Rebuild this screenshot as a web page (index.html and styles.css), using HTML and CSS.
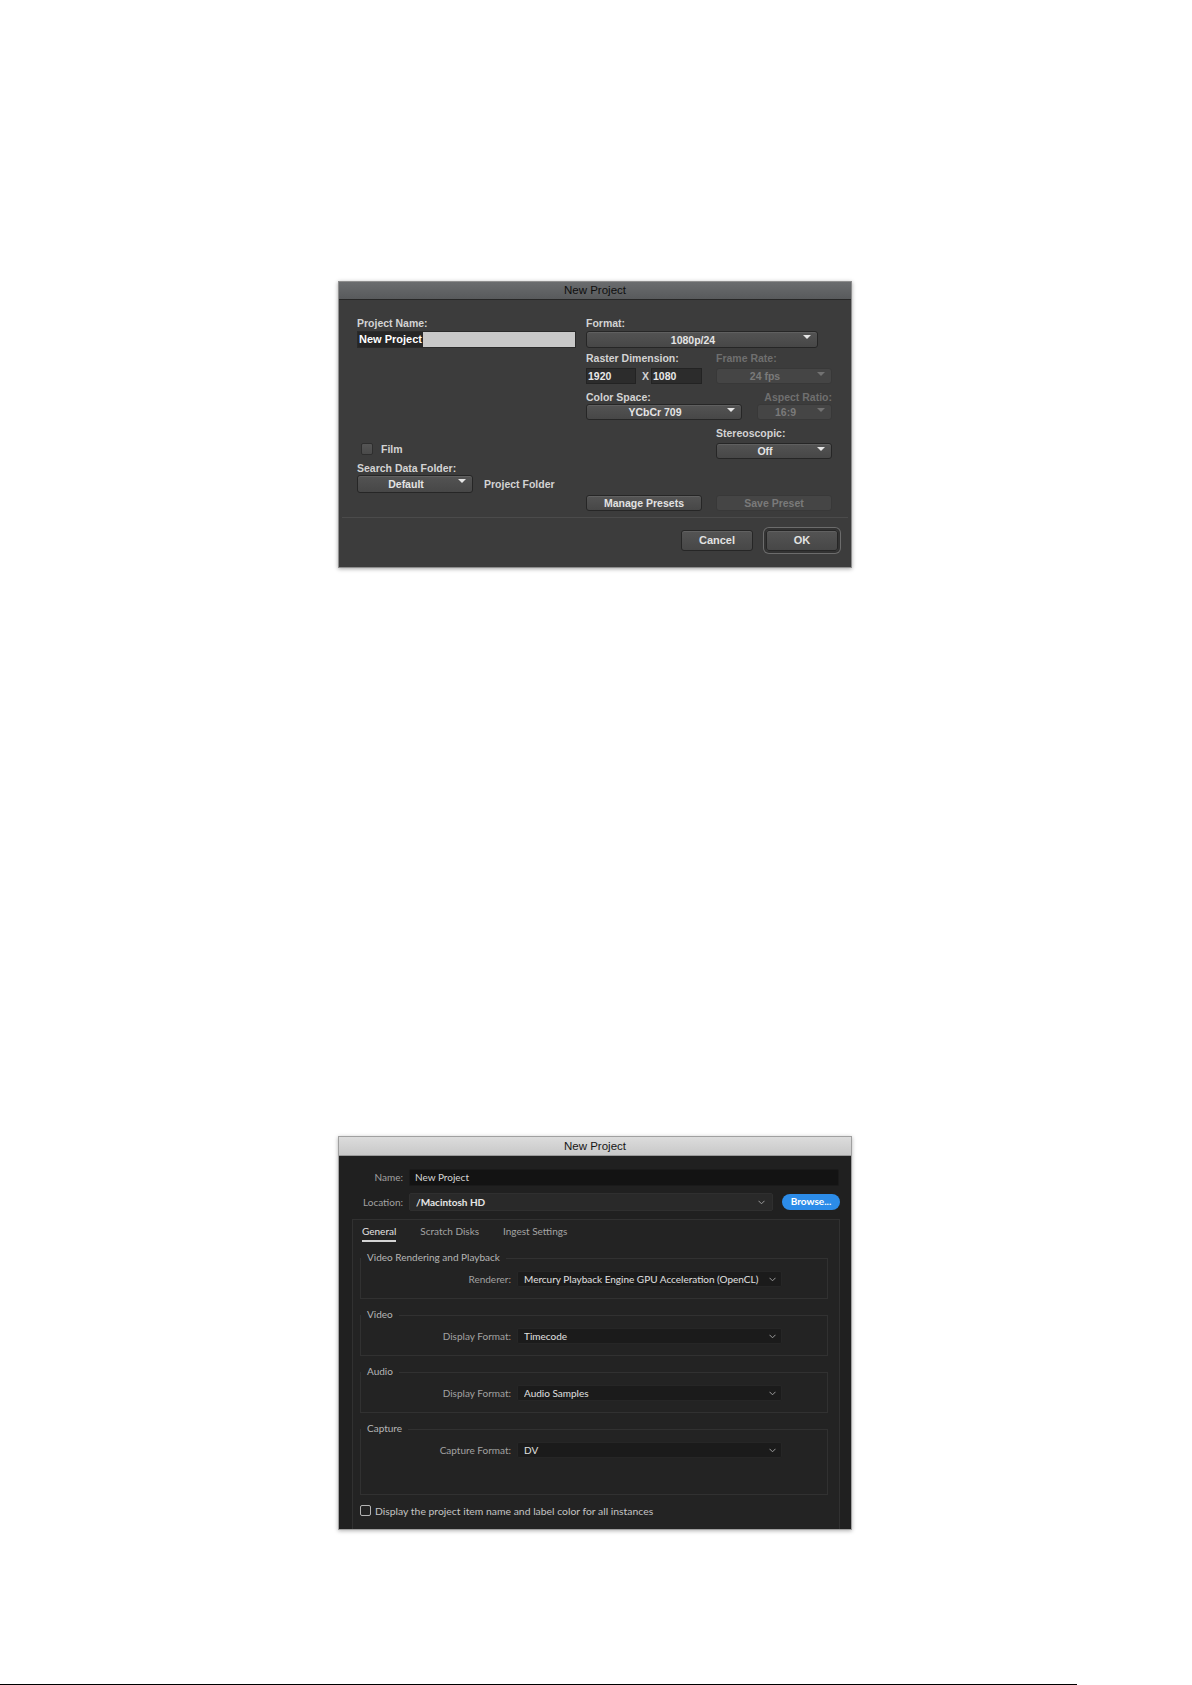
FILE: index.html
```html
<!DOCTYPE html>
<html lang="en">
<head>
<meta charset="utf-8">
<title>New Project</title>
<link rel="stylesheet" href="styles.css">
</head>
<body>
<div class="page">

  <!-- Media Composer: New Project -->
  <section class="avid">
    <header class="avid-title">New Project</header>
    <div class="avid-body">
      <div class="avid-left">
        <div class="lbl">Project Name:</div>
        <div class="name-field"><span class="sel">New Project</span></div>
        <div class="film"><span class="cbox"></span><span class="lbl">Film</span></div>
        <div class="lbl search-lbl">Search Data Folder:</div>
        <div class="folder-row">
          <div class="popup w116 h18"><span class="pv">Default</span><i class="tri"></i></div>
          <span class="lbl plain">Project Folder</span>
        </div>
      </div>
      <div class="avid-right">
        <div class="lbl">Format:</div>
        <div class="popup format"><span class="pv">1080p/24</span><i class="tri"></i></div>
        <div class="pair mt4">
          <span class="lbl">Raster Dimension:</span>
          <span class="lbl dim">Frame Rate:</span>
        </div>
        <div class="raster-row">
          <div class="field w50">1920</div>
          <span class="lbl times">X</span>
          <div class="field w51">1080</div>
          <div class="popup off w116 push"><span class="pv">24 fps</span><i class="tri"></i></div>
        </div>
        <div class="spread mt7">
          <span class="lbl">Color Space:</span>
          <span class="lbl dim">Aspect Ratio:</span>
        </div>
        <div class="color-row">
          <div class="popup w156"><span class="pv">YCbCr 709</span><i class="tri"></i></div>
          <div class="popup off w75 push"><span class="pv">16:9</span><i class="tri"></i></div>
        </div>
        <div class="lbl stereo-lbl">Stereoscopic:</div>
        <div class="popup w116 stereo"><span class="pv">Off</span><i class="tri"></i></div>
        <div class="pair preset-row">
          <div class="btn">Manage Presets</div>
          <div class="btn off">Save Preset</div>
        </div>
      </div>
    </div>
    <div class="avid-sep"></div>
    <div class="avid-actions">
      <div class="btn act">Cancel</div>
      <div class="btn act focus">OK</div>
    </div>
  </section>

  <!-- Premiere Pro: New Project -->
  <section class="pr">
    <header class="pr-title">New Project</header>
    <div class="pr-body">
      <div class="pr-row">
        <span class="pr-key">Name:</span>
        <div class="pr-input">New Project</div>
      </div>
      <div class="pr-row loc">
        <span class="pr-key">Location:</span>
        <div class="pr-select loc-select"><span class="sv">/Macintosh HD</span>
          <svg class="chev" width="7" height="5" viewBox="0 0 7 5"><polyline points="0.5,0.8 3.5,3.8 6.5,0.8" fill="none" stroke="#9c9c9c" stroke-width="1"/></svg>
        </div>
        <div class="browse">Browse...</div>
      </div>

      <div class="pr-panel">
        <nav class="tabs">
          <span class="tab active">General</span>
          <span class="tab">Scratch Disks</span>
          <span class="tab">Ingest Settings</span>
        </nav>

        <fieldset class="grp">
          <legend>Video Rendering and Playback</legend>
          <div class="grp-row">
            <span class="grp-key">Renderer:</span>
            <div class="pr-select"><span class="sv">Mercury Playback Engine GPU Acceleration (OpenCL)</span>
              <svg class="chev short" width="7" height="5" viewBox="0 0 7 5"><polyline points="0.5,0.8 3.5,3.8 6.5,0.8" fill="none" stroke="#9c9c9c" stroke-width="1"/></svg>
            </div>
          </div>
        </fieldset>

        <fieldset class="grp">
          <legend>Video</legend>
          <div class="grp-row">
            <span class="grp-key">Display Format:</span>
            <div class="pr-select"><span class="sv">Timecode</span>
              <svg class="chev" width="7" height="5" viewBox="0 0 7 5"><polyline points="0.5,0.8 3.5,3.8 6.5,0.8" fill="none" stroke="#9c9c9c" stroke-width="1"/></svg>
            </div>
          </div>
        </fieldset>

        <fieldset class="grp">
          <legend>Audio</legend>
          <div class="grp-row">
            <span class="grp-key">Display Format:</span>
            <div class="pr-select"><span class="sv">Audio Samples</span>
              <svg class="chev" width="7" height="5" viewBox="0 0 7 5"><polyline points="0.5,0.8 3.5,3.8 6.5,0.8" fill="none" stroke="#9c9c9c" stroke-width="1"/></svg>
            </div>
          </div>
        </fieldset>

        <fieldset class="grp tall">
          <legend>Capture</legend>
          <div class="grp-row">
            <span class="grp-key">Capture Format:</span>
            <div class="pr-select"><span class="sv">DV</span>
              <svg class="chev" width="7" height="5" viewBox="0 0 7 5"><polyline points="0.5,0.8 3.5,3.8 6.5,0.8" fill="none" stroke="#9c9c9c" stroke-width="1"/></svg>
            </div>
          </div>
        </fieldset>

        <div class="pr-check"><span class="pr-cbox"></span><span>Display the project item name and label color for all instances</span></div>
      </div>
    </div>
  </section>

  <div class="page-rule"></div>
</div>
</body>
</html>
```

FILE: styles.css
```css
html, body {
  margin: 0;
  padding: 0;
  background: #ffffff;
}

.page {
  width: 1192px;
  height: 1685px;
  display: flex;
  flex-direction: column;
  overflow: hidden;
}

/* ---------- Media Composer dialog ---------- */

.avid {
  box-sizing: border-box;
  width: 514px;
  height: 287px;
  margin: 281px 0 0 338px;
  border: 1px solid #8e8e8e;
  background: #3c3c3c;
  box-shadow: 0 1px 4px rgba(0, 0, 0, 0.35);
  display: flex;
  flex-direction: column;
  font-family: "Liberation Sans", Arial, sans-serif;
  flex-shrink: 0;
}

.avid-title {
  height: 17px;
  line-height: 17px;
  border-bottom: 1px solid #262626;
  background: linear-gradient(#6a6c6e, #585a5c);
  text-align: center;
  font-size: 11.5px;
  color: #0e0e0e;
}

.avid-body {
  display: flex;
  padding: 17px 18px 0 18px;
}

.avid-left {
  width: 219px;
  display: flex;
  flex-direction: column;
}

.avid-right {
  width: 246px;
  margin-left: 10px;
  display: flex;
  flex-direction: column;
}

.lbl {
  height: 12px;
  line-height: 12px;
  font-size: 10.5px;
  font-weight: bold;
  color: #d3d3d3;
  white-space: nowrap;
}

.lbl.dim {
  color: #6f6f6f;
}

.name-field {
  box-sizing: border-box;
  margin-top: 2px;
  height: 17px;
  background: #c8c8c8;
  border: 1px solid #2a2a2a;
  display: flex;
  align-items: center;
}

.sel {
  background: #262626;
  color: #ffffff;
  font-size: 11px;
  font-weight: bold;
  line-height: 15px;
  padding: 0 1px;
}

.film {
  margin-top: 95px;
  height: 12px;
  display: flex;
  align-items: center;
}

.cbox {
  box-sizing: border-box;
  width: 12px;
  height: 12px;
  margin-left: 4px;
  margin-right: 8px;
  border: 1px solid #2e2e2e;
  border-radius: 2px;
  background: linear-gradient(#555555, #4a4a4a);
}

.search-lbl {
  margin-top: 7px;
}

.folder-row {
  margin-top: 1px;
  display: flex;
  align-items: center;
}

.plain {
  margin-left: 11px;
}

/* popup buttons */
.popup {
  box-sizing: border-box;
  height: 16px;
  display: flex;
  align-items: flex-start;
  border: 1px solid #262626;
  border-radius: 3px;
  background: linear-gradient(#535353, #474747);
  box-shadow: inset 0 1px 0 rgba(255, 255, 255, 0.08);
}

.pv {
  flex: 1;
  align-self: center;
  text-align: center;
  font-size: 10.5px;
  font-weight: bold;
  color: #e4e4e4;
  line-height: 12px;
  white-space: nowrap;
}

.tri {
  width: 0;
  height: 0;
  margin: 3px 6px 0 4px;
  border-left: 4px solid transparent;
  border-right: 4px solid transparent;
  border-top: 4px solid #e6e6e6;
}

.popup.off {
  background: #454545;
  border-color: #383838;
  box-shadow: none;
}

.popup.off .pv {
  color: #7a7a7a;
}

.popup.off .tri {
  border-top-color: #727272;
}

.format {
  margin-top: 2px;
  width: 232px;
  height: 17px;
}

.w116 { width: 116px; }
.w156 { width: 156px; }
.w75 { width: 75px; }
.w50 { width: 50px; }
.w51 { width: 51px; }
.h18 { height: 18px; }
.mt4 { margin-top: 4px; }
.mt7 { margin-top: 7px; }
.push { margin-left: auto; }

.pair {
  display: grid;
  grid-template-columns: 116px 116px;
  column-gap: 14px;
}

.spread {
  display: flex;
  justify-content: space-between;
}

.raster-row,
.color-row {
  display: flex;
  align-items: center;
  height: 16px;
}

.raster-row {
  margin-top: 4px;
}

.color-row {
  margin-top: 1px;
}

.field {
  box-sizing: border-box;
  height: 16px;
  line-height: 14px;
  padding-left: 1px;
  background: #2c2c2c;
  border: 1px solid #232323;
  font-size: 10.5px;
  font-weight: bold;
  color: #e8e8e8;
}

.times {
  width: 15px;
  padding-left: 6px;
  box-sizing: border-box;
}

.stereo-lbl {
  margin-top: 7px;
  padding-left: 130px;
}

.stereo {
  margin-top: 4px;
  margin-left: 130px;
}

.preset-row {
  margin-top: 36px;
}

.btn {
  box-sizing: border-box;
  height: 16px;
  line-height: 14px;
  text-align: center;
  font-size: 10.5px;
  font-weight: bold;
  color: #e2e2e2;
  border: 1px solid #262626;
  border-radius: 3px;
  background: linear-gradient(#545454, #474747);
  box-shadow: inset 0 1px 0 rgba(255, 255, 255, 0.08);
  white-space: nowrap;
}

.btn.off {
  color: #7a7a7a;
  background: #454545;
  border-color: #383838;
  box-shadow: none;
}

.avid-sep {
  height: 1px;
  margin: 6px 3px 0 3px;
  background: #4b4b4b;
}

.avid-actions {
  flex: 1;
  display: flex;
  justify-content: flex-end;
  align-items: flex-start;
  padding: 12px 13px 0 0;
}

.btn.act {
  width: 72px;
  height: 21px;
  line-height: 19px;
  font-size: 11px;
}

.btn.act + .btn.act {
  margin-left: 13px;
}

.btn.focus {
  box-shadow: inset 0 1px 0 rgba(255, 255, 255, 0.08), 0 0 0 2px #333333, 0 0 0 3px #6c6c6c;
}

/* ---------- Premiere Pro dialog ---------- */

.pr {
  box-sizing: border-box;
  width: 514px;
  height: 394px;
  margin: 568px 0 0 338px;
  border: 1px solid #a0a0a0;
  background: #202020;
  box-shadow: 0 1px 4px rgba(0, 0, 0, 0.3);
  display: flex;
  flex-direction: column;
  font-family: Lato, "Liberation Sans", sans-serif;
  font-size: 10px;
  flex-shrink: 0;
}

.pr-title {
  height: 18px;
  line-height: 18px;
  border-bottom: 1px solid #9a9a9a;
  background: linear-gradient(#dcdcdc, #c8c8c8);
  text-align: center;
  font-family: "Liberation Sans", Arial, sans-serif;
  font-size: 11.5px;
  color: #161616;
}

.pr-body {
  flex: 1;
  display: flex;
  flex-direction: column;
  padding: 13px 0 0 0;
}

.pr-row {
  display: flex;
  align-items: center;
  height: 16px;
  padding-right: 12px;
}

.pr-row.loc {
  margin-top: 8px;
  height: 18px;
  padding-right: 11px;
}

.pr-key {
  width: 64px;
  margin-right: 6px;
  text-align: right;
  color: #a2a2a2;
  white-space: nowrap;
  line-height: 12px;
  padding-bottom: 1px;
}

.pr-input {
  box-sizing: border-box;
  flex: 1;
  height: 17px;
  line-height: 14px;
  padding-left: 5px;
  background: #131313;
  border: 1px solid #1a1a1a;
  border-radius: 2px;
  color: #d6d6d6;
}

.pr-select {
  box-sizing: border-box;
  height: 16px;
  display: flex;
  align-items: center;
  padding: 0 5px 0 6px;
  background: #1b1b1b;
  border: 1px solid #262626;
  border-radius: 2px;
  width: 265px;
}

.sv {
  flex: 1;
  color: #e0e0e0;
  white-space: nowrap;
  overflow: hidden;
  line-height: 12px;
  padding-bottom: 1px;
}

.chev {
  flex-shrink: 0;
}

.loc-select {
  flex: 1;
  width: auto;
  height: 18px;
  background: #292929;
  border-color: #2f2f2f;
  padding-right: 7px;
}

.loc-select .sv {
  font-weight: bold;
  color: #e6e6e6;
}

.browse {
  box-sizing: border-box;
  width: 58px;
  height: 16px;
  margin-left: 9px;
  line-height: 15px;
  text-align: center;
  border-radius: 8px;
  background: #2c8ce9;
  color: #ffffff;
  font-weight: bold;
}

.pr-panel {
  flex: 1;
  display: flex;
  flex-direction: column;
  margin: 8px 11px 0 13px;
  border: 1px solid #313131;
  border-bottom: none;
  background: #232323;
}

.tabs {
  display: flex;
  gap: 24px;
  margin-top: 5px;
  padding-left: 9px;
  height: 17px;
}

.tab {
  height: 14px;
  line-height: 13px;
  color: #a4a4a4;
}

.tab.active {
  color: #e2e2e2;
  padding-bottom: 1px;
  border-bottom: 2px solid #d4d4d4;
}

.grp {
  width: 468px;
  box-sizing: border-box;
  margin: 10px 0 0 7px;
  padding: 7px 0 11px 0;
  border: 1px solid #313131;
  min-width: 0;
}

.grp.tall {
  padding-bottom: 36px;
}

.grp legend {
  padding: 0 6px;
  line-height: 11px;
  padding-bottom: 1px;
  color: #b6b6b6;
}

.grp-row {
  display: flex;
  align-items: center;
  height: 16px;
}

.grp-key {
  width: 150px;
  margin-right: 6px;
  text-align: right;
  color: #a2a2a2;
  white-space: nowrap;
  line-height: 12px;
  padding-bottom: 1px;
}

.pr-check {
  margin: 9px 0 0 7px;
  height: 13px;
  display: flex;
  align-items: center;
  color: #c4c4c4;
  font-size: 10.4px;
}

.pr-cbox {
  box-sizing: border-box;
  width: 11px;
  height: 11px;
  margin-right: 4px;
  border: 1px solid #b4b4b4;
  border-radius: 2px;
}

/* page footer rule */
.page-rule {
  margin-top: auto;
  width: 1077px;
  height: 1px;
  background: #000000;
  flex-shrink: 0;
}
```
